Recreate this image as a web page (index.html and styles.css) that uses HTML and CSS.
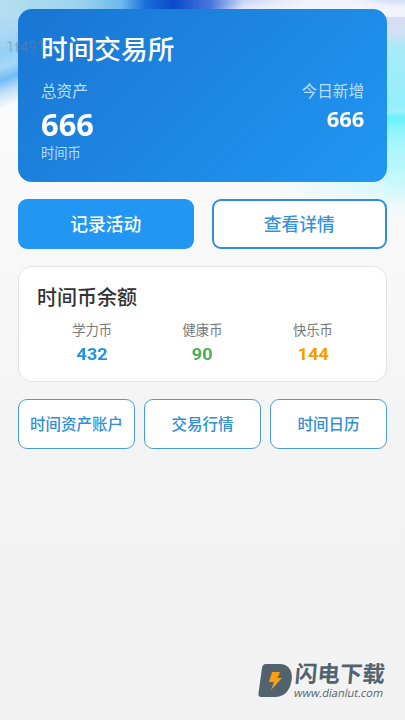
FILE: index.html
```html
<!DOCTYPE html>
<html lang="zh-CN">
<head>
<meta charset="utf-8">
<meta name="viewport" content="width=device-width, initial-scale=1">
<title>时间交易所</title>
<link rel="stylesheet" href="styles.css">
</head>
<body>
<svg class="backdrop" viewBox="0 0 405 720" aria-hidden="true">
  <defs>
    <linearGradient id="base" x1="0" y1="0" x2="0" y2="1"><stop offset="0" stop-color="#fbfbfb"/><stop offset=".3" stop-color="#f9f9f9"/><stop offset=".65" stop-color="#f3f3f3"/><stop offset="1" stop-color="#f2f2f2"/></linearGradient>
    <linearGradient id="left" gradientUnits="userSpaceOnUse" x1="0" y1="0" x2="36" y2="96"><stop offset="0" stop-color="#b5dff0"/><stop offset=".3" stop-color="#add9f3"/><stop offset=".5" stop-color="#93cff6"/><stop offset=".62" stop-color="#a8d8f7"/><stop offset=".74" stop-color="#70bcf4"/><stop offset=".86" stop-color="#c3e1f8"/><stop offset="1" stop-color="#fbfbfb"/></linearGradient>
    <linearGradient id="top" x1="0" y1="0" x2="1" y2="0"><stop offset="0" stop-color="#b5dff0"/><stop offset=".2" stop-color="#9bd3ee"/><stop offset=".3" stop-color="#6cb9ec"/><stop offset=".36" stop-color="#1c6cdb"/><stop offset=".43" stop-color="#0a4acb"/><stop offset=".52" stop-color="#4a77de"/><stop offset=".6" stop-color="#c5d4f5"/><stop offset=".75" stop-color="#eff2fb"/><stop offset="1" stop-color="#eef2fa"/></linearGradient>
    <linearGradient id="right" gradientUnits="userSpaceOnUse" x1="0" y1="15" x2="0" y2="205"><stop offset="0" stop-color="#dcdcf3"/><stop offset=".1" stop-color="#cfe0f4"/><stop offset=".17" stop-color="#aaeaf7"/><stop offset=".51" stop-color="#8ff0fc"/><stop offset=".54" stop-color="#48effd"/><stop offset=".68" stop-color="#83f4fc"/><stop offset=".85" stop-color="#d5f9fb"/><stop offset="1" stop-color="#f9f9f9"/></linearGradient>
    <filter id="soft" x="-20%" y="-100%" width="140%" height="300%"><feGaussianBlur stdDeviation="3"/></filter>
    <radialGradient id="haze"><stop offset="0" stop-color="#b3f7fb"/><stop offset=".5" stop-color="#c6f8fb" stop-opacity=".6"/><stop offset="1" stop-color="#f9f9f9" stop-opacity="0"/></radialGradient>
  </defs>
  <rect width="405" height="720" fill="url(#base)"/>
  <rect width="60" height="120" fill="url(#left)"/>
  <rect x="60" width="345" height="18" fill="#fbfbfb"/>
  <rect width="405" height="18" fill="url(#top)"/>
  <path d="M215 14L250 4Q300 1 425 4V18H215Z" fill="#f4f5fb" opacity=".7" filter="url(#soft)"/>
  <path d="M345-8H412V3Q380 5 345-8Z" fill="#a9c2ef" opacity=".5" filter="url(#soft)"/>
  <rect x="384" y="17" width="21" height="188" fill="url(#right)"/>
  <ellipse cx="405" cy="165" rx="170" ry="62" fill="url(#haze)" opacity=".75"/>
</svg>
<main class="app">
  <section class="hero">
    <h1>时间交易所</h1>
    <span class="stamp">1f491</span>
    <div class="assets">
      <div class="total"><p class="label">总资产</p><strong>666</strong><p class="unit">时间币</p></div>
      <div class="today"><p class="label">今日新增</p><strong>666</strong></div>
    </div>
  </section>
  <div class="actions"><button class="primary">记录活动</button><button class="outline">查看详情</button></div>
  <section class="balance">
    <h2>时间币余额</h2>
    <div class="coins">
      <div><p>学力币</p><strong class="blue">432</strong></div>
      <div><p>健康币</p><strong class="green">90</strong></div>
      <div><p>快乐币</p><strong class="orange">144</strong></div>
    </div>
  </section>
  <nav class="links"><button>时间资产账户</button><button>交易行情</button><button>时间日历</button></nav>
  <footer class="brand">
    <svg viewBox="0 0 35 34" aria-hidden="true"><path d="M8 0H22C31 0 36 8 33 19C31 28 25 33 17 33H3Q0 33 .5 29L4 4Q4.500 0 8 0Z" fill="#52636e"/><path d="M14 8H22L19.500 14H24L13 26L16 18H11Z" fill="#ff9d12"/></svg>
    <div><span class="brand-name">闪电下载</span><span class="brand-url">www.dianlut.com</span></div>
  </footer>
</main>
</body>
</html>
```
FILE: styles.css
```css
* { box-sizing: border-box; }
body { margin: 0; background: #f4f4f4; font-family: Roboto, "Noto Sans CJK SC", sans-serif; }
h1, h2, p { margin: 0; font-weight: 400; }
button { font: 500 17px/24px Roboto, "Noto Sans CJK SC", sans-serif; border-radius: 9px; padding: 2px 0 0; white-space: nowrap; }
.backdrop { position: absolute; inset: 0; width: 100%; height: 720px; }
.app { position: relative; height: 720px; padding: 9px 18px 20px; display: flex; flex-direction: column; overflow: hidden; }
.hero { position: relative; height: 173px; padding: 22px 23px 0; border-radius: 14px; color: #fff; background: linear-gradient(135deg, #1976d2, #2196f3); }
h1 { font-size: 26.7px; line-height: 38px; font-weight: 500; }
.stamp { position: absolute; left: -12px; top: 29px; font-size: 15px; line-height: 18px; color: rgba(110, 130, 150, .48); }
.assets { display: flex; justify-content: space-between; margin-top: 12px; }
.label { font-size: 15.6px; line-height: 23px; color: #bbdefb; }
.total strong { display: block; font: 700 29.5px/36px "Noto Sans", sans-serif; margin-top: 3px; transform-origin: left; transform: scaleX(1.045); }
.unit { font-size: 13.3px; line-height: 20px; color: #bbdefb; margin-top: 1px; }
.today { text-align: right; }
.today strong { display: block; font: 700 21.3px/28px "Noto Sans", sans-serif; margin-top: 1px; transform-origin: right; transform: scaleX(1.03); }
.actions { display: grid; grid-template-columns: 1fr 1fr; gap: 18px; margin-top: 17px; height: 50px; }
.actions button { font-size: 17.8px; }
.primary { background: #2196f3; color: #fff; border: 0; }
.outline { background: #fff; color: #3992d8; border: 2px solid #2f8edf; }
.balance { height: 116px; margin-top: 17px; padding: 17px 18px; background: #fff; border: 1px solid #e3e3e3; border-radius: 14px; }
h2 { font-size: 20px; line-height: 28px; color: #333; font-weight: 500; }
.coins { display: grid; grid-template-columns: repeat(3, 1fr); text-align: center; margin-top: 9px; }
.coins p { font-size: 13.3px; line-height: 20px; color: #777; }
.coins strong { display: block; font: 700 17.3px/24px Roboto, sans-serif; margin-top: 1px; transform: scaleX(1.05); }
.blue { color: #2491e8; } .green { color: #4caf50; } .orange { color: #ff9800; }
.links { height: 50px; margin-top: 17px; display: grid; grid-template-columns: repeat(3, 1fr); gap: 9px; }
.links button { font-size: 15.5px; color: #318fd5; background: #fff; border: 1.5px solid #4b9cda; }
.brand { display: flex; align-items: center; gap: 2px; margin-top: auto; align-self: flex-end; width: 129px; height: 39px; color: #52636e; }
.brand svg { width: 35px; height: 34px; flex: none; }
.brand div { display: flex; flex-direction: column; }
.brand-name { font-size: 22.5px; line-height: 25px; font-weight: 700; transform: skewX(-5deg); white-space: nowrap; }
.brand-url { font: 500 11px/12px "Open Sans", sans-serif; transform: translateX(-1px) skewX(-12deg); white-space: nowrap; }
```
